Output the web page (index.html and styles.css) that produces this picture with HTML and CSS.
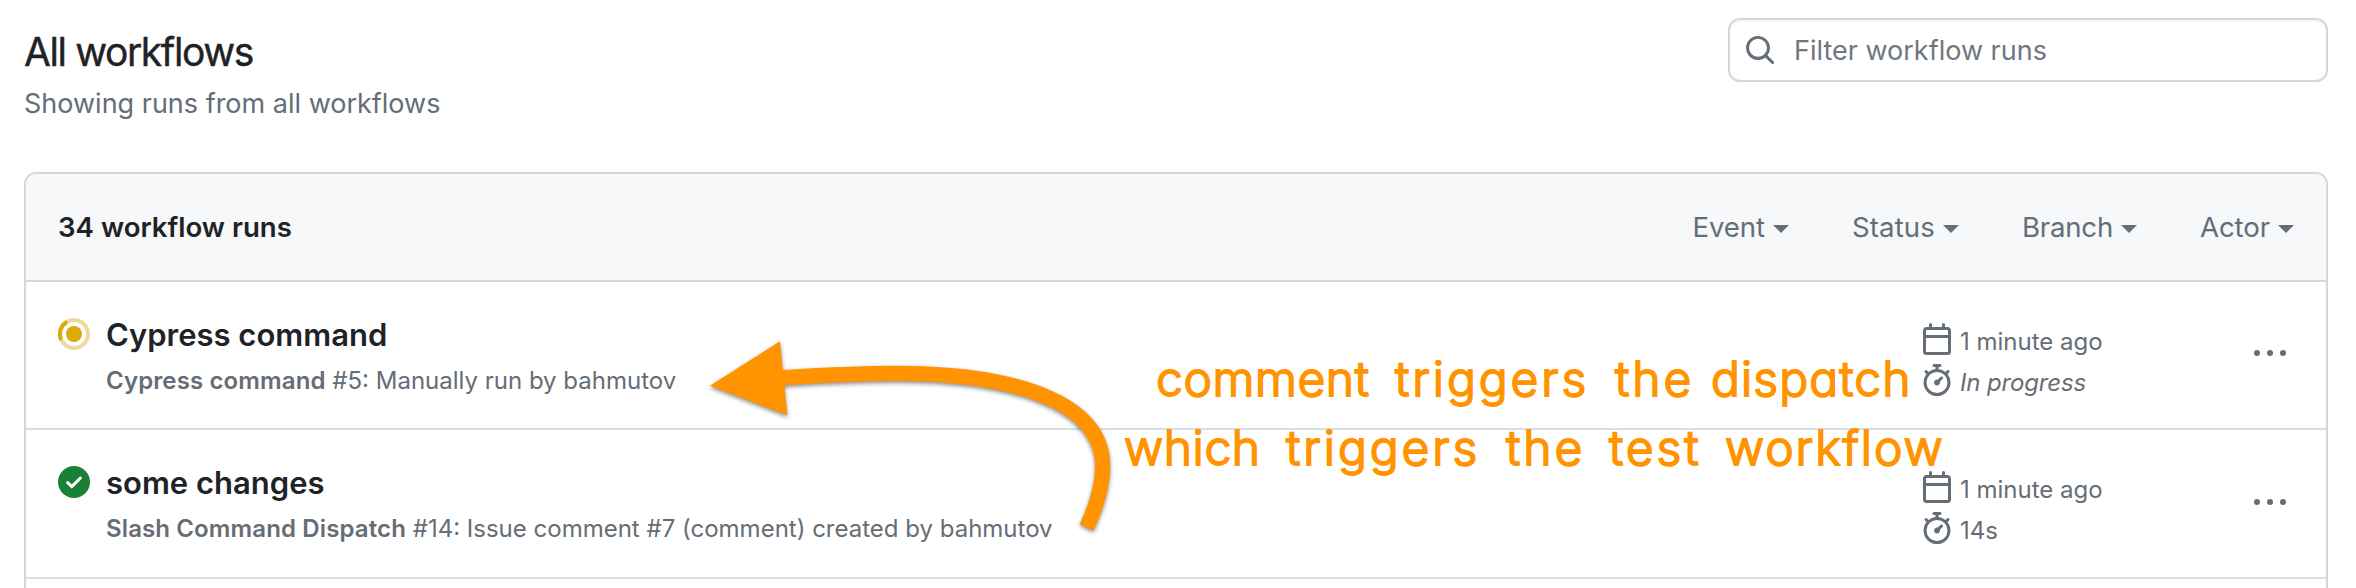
FILE: index.html
```html
<!DOCTYPE html>
<html lang="en">
<head>
<meta charset="utf-8">
<title>All workflows</title>
<link rel="stylesheet" href="styles.css">
</head>
<body>
<svg class="sprite" aria-hidden="true">
  <symbol id="calendar" viewBox="0 0 16 16"><path d="M4.75 0a.75.75 0 0 1 .75.75V2h5V.75a.75.75 0 0 1 1.5 0V2h1.25c.966 0 1.75.784 1.75 1.75v10.5A1.75 1.75 0 0 1 13.25 16H2.75A1.75 1.75 0 0 1 1 14.25V3.75C1 2.784 1.784 2 2.75 2H4V.75A.75.75 0 0 1 4.75 0ZM2.5 7.5v6.75c0 .138.112.25.25.25h10.5a.25.25 0 0 0 .25-.25V7.5Zm10.75-4H2.75a.25.25 0 0 0-.25.25V6h11V3.75a.25.25 0 0 0-.25-.25Z"/></symbol>
  <symbol id="stopwatch" viewBox="0 0 16 16"><path d="M5.75.75A.75.75 0 0 1 6.5 0h3a.75.75 0 0 1 0 1.5h-.75v1l-.001.041a6.724 6.724 0 0 1 3.464 1.435l.007-.006.75-.75a.749.749 0 0 1 1.275.326.749.749 0 0 1-.215.734l-.75.75-.006.007a6.75 6.75 0 1 1-10.548 0L2.72 5.03l-.75-.75a.751.751 0 0 1 .018-1.042.751.751 0 0 1 1.042-.018l.75.75.007.006A6.72 6.72 0 0 1 7.25 2.541V1.5H6.5a.75.75 0 0 1-.75-.75ZM8 14.5a5.25 5.25 0 1 0-.001-10.501A5.25 5.25 0 0 0 8 14.5Zm.389-6.7 1.33-1.33a.75.75 0 1 1 1.061 1.06L9.45 8.861A1.503 1.503 0 0 1 8 10.75a1.499 1.499 0 1 1 .389-2.95Z"/></symbol>
  <symbol id="kebab" viewBox="0 0 16 16"><path d="M8 9a1.5 1.5 0 1 0 0-3 1.5 1.5 0 0 0 0 3ZM1.5 9a1.5 1.5 0 1 0 0-3 1.5 1.5 0 0 0 0 3Zm13 0a1.5 1.5 0 1 0 0-3 1.5 1.5 0 0 0 0 3Z"/></symbol>
</svg>
<header class="page-head">
  <div class="heading">
    <h1 class="title">All workflows</h1>
    <p class="subtitle">Showing runs from all workflows</p>
  </div>
  <div class="search">
    <svg class="icon" viewBox="0 0 16 16"><path d="M10.68 11.74a6 6 0 0 1-7.922-8.982 6 6 0 0 1 8.982 7.922l3.04 3.04a.749.749 0 0 1-.326 1.275.749.749 0 0 1-.734-.215ZM11.5 7a4.499 4.499 0 1 0-8.997 0A4.499 4.499 0 0 0 11.5 7Z"/></svg>
    <span class="placeholder">Filter workflow runs</span>
  </div>
</header>
<main class="box">
  <div class="box-head">
    <strong class="count">34 workflow runs</strong>
    <nav class="filters">
      <a class="filter">Event</a>
      <a class="filter filter-status">Status</a>
      <a class="filter filter-branch">Branch</a>
      <a class="filter filter-actor">Actor</a>
    </nav>
  </div>
  <section class="run">
    <svg class="status" viewBox="0 0 16 16"><circle cx="8" cy="8" r="7" fill="none" stroke="#f1d899" stroke-width="2"/><path d="M1.6 10.9A7 7 0 0 1 4.5 1.9" fill="none" stroke="#dbab0a" stroke-width="2"/><circle cx="8" cy="8" r="4" fill="#dbab0a"/></svg>
    <div class="info">
      <h2 class="name">Cypress command</h2>
      <p class="detail"><b>Cypress command</b> #5: Manually run by bahmutov</p>
    </div>
    <div class="meta">
      <div class="meta-line"><svg class="icon"><use href="#calendar"/></svg><span>1 minute ago</span></div>
      <div class="meta-line"><svg class="icon"><use href="#stopwatch"/></svg><i>In progress</i></div>
    </div>
    <svg class="kebab"><use href="#kebab"/></svg>
  </section>
  <section class="run run-done">
    <svg class="status" viewBox="0 0 16 16"><circle cx="8" cy="8" r="8" fill="#1a7f37"/><path d="M4.8 8.3 6.9 10.3 11.2 6" fill="none" stroke="#fff" stroke-width="1.5" stroke-linecap="round" stroke-linejoin="round"/></svg>
    <div class="info">
      <h2 class="name">some changes</h2>
      <p class="detail"><b>Slash Command Dispatch</b> #14: Issue comment #7 (comment) created by bahmutov</p>
    </div>
    <div class="meta">
      <div class="meta-line"><svg class="icon"><use href="#calendar"/></svg><span>1 minute ago</span></div>
      <div class="meta-line"><svg class="icon"><use href="#stopwatch"/></svg><span>14s</span></div>
    </div>
    <svg class="kebab"><use href="#kebab"/></svg>
  </section>
</main>
<svg class="arrow" viewBox="700 330 420 210"><path d="M1086.7 527.3C1096 507 1102.7 488 1102.7 466.7C1102.7 400 1010 373.3 896.7 373.3C860 373.3 822 375 780 377.9" fill="none" stroke="#ff9300" stroke-width="15.2"/><path d="M710 385.7 780 341.3 787.3 415.3Z" fill="#ff9300"/></svg>
<div class="note note-1"><span>comment</span><span class="wide">triggers</span><span class="wide">the</span><span class="snug">dispatch</span></div>
<div class="note note-2"><span>which</span><span class="wide">triggers</span><span class="wide">the</span><span class="wide">test</span><span class="medium">workflow</span></div>
</body>
</html>
```
FILE: styles.css
```css
* { box-sizing: border-box; }
body {
  margin: 0;
  height: 588px;
  overflow: hidden;
  position: relative;
  background: #fff;
  color: #1f2328;
  font-family: Inter, "Liberation Sans", sans-serif;
  font-size: 27px;
}
h1, h2, p { margin: 0; font-weight: 400; }
.sprite { position: absolute; width: 0; height: 0; }
.icon { width: 32px; height: 32px; fill: #656d76; flex: none; }

.page-head {
  display: flex;
  justify-content: space-between;
  align-items: flex-start;
  height: 172px;
  padding: 18px 28px 0 24px;
}
.title { font-size: 39px; line-height: 48px; padding-top: 10px; letter-spacing: -1.4px; -webkit-text-stroke: .4px currentColor; }
.subtitle { line-height: 42px; margin-top: 7px; color: #656d76; }
.search {
  display: flex;
  align-items: center;
  gap: 18px;
  width: 600px;
  height: 64px;
  padding-left: 14px;
  border: 2px solid #d0d7de;
  border-radius: 12px;
  box-shadow: inset 0 2px 0 rgba(208, 215, 222, .2);
  color: #6e7781;
}

.box {
  margin: 0 28px 0 24px;
  height: 440px;
  border: 2px solid #d0d7de;
  border-radius: 12px 12px 0 0;
}
.box-head {
  display: flex;
  justify-content: space-between;
  align-items: center;
  height: 108px;
  padding: 0 32px;
  background: #f6f8fa;
  border-bottom: 2px solid #d0d7de;
  border-radius: 10px 10px 0 0;
  font-size: 27.6px;
}
.count { font-weight: 600; }
.filters { display: flex; gap: 63px; color: #656d76; }
.filter { display: flex; align-items: center; gap: 8px; letter-spacing: -.1px; }
.filter-status { letter-spacing: .1px; }
.filter-branch { letter-spacing: -.2px; }
.filter-actor { letter-spacing: -.1px; }
.filter::after {
  content: "";
  border: 8px solid transparent;
  border-top-color: currentColor;
  border-bottom: 0;
  margin-top: 3px;
}

.run {
  display: flex;
  align-items: flex-start;
  height: 148px;
  padding: 36px 40px 0 32px;
  border-bottom: 2px solid #d8dee4;
}
.run-done { height: 149px; }
.run-done .kebab { margin-top: 21px; }
.status { width: 32px; height: 32px; flex: none; }
.info { width: 1831px; padding-left: 16px; }
.name { font-size: 31px; font-weight: 600; line-height: 36px; margin-top: -1px; }
.detail { font-size: 24px; line-height: 32px; margin-top: 12px; color: #656d76; }
.detail b { font-weight: 600; letter-spacing: .12px; }
.meta { display: grid; gap: 9px; padding-top: 5px; color: #656d76; font-size: 24px; }
.meta-line { display: flex; align-items: flex-start; gap: 7px; height: 32px; line-height: 37px; }
.meta-line i { letter-spacing: -.15px; }
.kebab { width: 32px; height: 32px; margin: 20px 0 0 auto; fill: #656d76; }

.arrow {
  position: absolute;
  left: 700px;
  top: 330px;
  width: 420px;
  height: 210px;
  filter: drop-shadow(0 2px 2px rgba(0, 0, 0, .45));
}
.note {
  position: absolute;
  display: grid;
  color: #ff9300;
  font-size: 48px;
  font-weight: 300;
  line-height: 60px;
  font-feature-settings: "cv11";
  -webkit-text-stroke: 1.8px #ff9300;
  stroke-linejoin: round;
  white-space: nowrap;
}
.note-1 { left: 1156px; top: 349px; grid-template-columns: 239px 220px 96px 200px; }
.note-2 { left: 1124px; top: 418px; grid-template-columns: 162px 220px 103px 116px 220px; }
.note span { letter-spacing: .6px; }
.note .snug { letter-spacing: 1.1px; }
.note .medium { letter-spacing: 1.9px; }
.note .wide { letter-spacing: 2.9px; }
```
